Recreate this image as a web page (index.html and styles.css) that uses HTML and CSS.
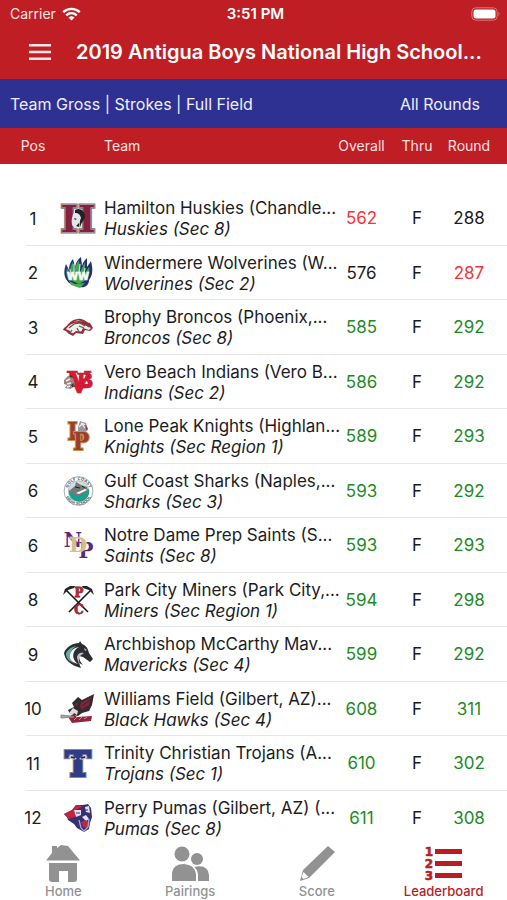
FILE: index.html
```html
<!DOCTYPE html>
<html lang="en">
<head>
<meta charset="utf-8">
<meta name="viewport" content="width=device-width, initial-scale=1">
<title>Leaderboard</title>
<link rel="stylesheet" href="styles.css">
</head>
<body>
<header class="top">
  <div class="status">
    <span class="carrier">Carrier
      <svg width="19" height="14" viewBox="0 0 19 14" fill="none" stroke="#fff" stroke-width="2.4"><path d="M1.2 5.2a12 12 0 0 1 16.600 0M4.200 8.300a7.600 7.600 0 0 1 10.600 0"/><path d="M9.500 13.600 6.500 10.600a4.300 4.300 0 0 1 6 0z" fill="#fff" stroke="none"/></svg>
    </span>
    <span class="clock">3:51 PM</span>
    <span class="battery">
      <svg width="30" height="14" viewBox="0 0 30 14"><rect x=".8" y=".8" width="25.400" height="12.400" rx="4" fill="none" stroke="#e0757a" stroke-width="1"/><rect x="2.500" y="2.500" width="22" height="9" rx="2.500" fill="#fff"/><path d="M27.500 4.800q2 2.200 0 4.400z" fill="#e0757a"/></svg>
    </span>
  </div>
  <div class="titlebar">
    <button class="menu" type="button" aria-label="Menu">
      <svg width="22" height="16" viewBox="0 0 22 16" fill="#fbe9e9"><path d="M0 0h22v2.500H0zM0 6.700h22v2.500H0zM0 13.400h22v2.500H0z"/></svg>
    </button>
    <h1>2019 Antigua Boys National High School...</h1>
  </div>
</header>
<div class="filter">
  <span>Team Gross | Strokes | Full Field</span>
  <button type="button">All Rounds</button>
</div>
<main class="board">
<table>
  <colgroup><col class="c-pos"><col class="c-logo"><col><col class="c-overall"><col class="c-thru"><col class="c-round"></colgroup>
  <thead>
    <tr><th class="pos">Pos</th><th></th><th class="team">Team</th><th>Overall</th><th>Thru</th><th class="round">Round</th></tr>
  </thead>
  <tbody>
    <tr>
      <td class="pos">1</td>
      <td class="logo"><svg width="40" height="36" viewBox="0 0 40 36"><text x="19" y="32" text-anchor="middle" class="slab" font-size="37" fill="#86203f" stroke="#77777b" stroke-width="3">H</text><text x="19" y="32" text-anchor="middle" class="slab" font-size="37" fill="#86203f" stroke="#b9a5ac" stroke-width="1">H</text><path d="M13 25c-1-5 0-10 3-14l2 1c4-1 6 2 6 6l-2 5 1 4-7 1z" fill="#e4e8e6"/><path d="M16 10c5-3 10 1 10 7-1 4-4 5-5 11-1-4 0-8 1-10-1-4-3-5-6-5zM15 18l3 1-2 1zM17 26l3-3 0 4z" fill="#222"/></svg></td>
      <td class="team">Hamilton Huskies (Chandle...<i>Huskies (Sec 8)</i></td>
      <td class="under">562</td><td>F</td><td class="round">288</td>
    </tr>
    <tr>
      <td class="pos">2</td>
      <td class="logo"><svg width="40" height="36" viewBox="0 0 40 36"><path d="M10 28C5 23 4 17 7 9l3 6c0-4 1-8 4-11l2 8c1-5 3-8 6-10l1 9c1-4 3-6 5-8l0 9 4-6c2 8 2 14-2 19 0 6-5 8-9 7-3-1-7-2-11-4z" fill="#272d72"/><path d="M9 24c-2-4-2-8-1-11l3 6c0-6 1-9 3-12l1 10c1-6 3-9 5-12l1 12 5-10 0 11 4-6c1 5 0 10-3 13l-7 4z" fill="#42a94d"/><path d="m11 14 1 7m3-12v9m6-9-1 9m6-5-1 6" stroke="#b9d7e8" stroke-width="1.300"/><path d="m10 26 6 3 10-1-5 5-9-3z" fill="#48ad4e"/><text x="19" y="25" text-anchor="middle" class="heavy" font-size="10" fill="#fff" stroke="#fff" stroke-width=".5">WW</text></svg></td>
      <td class="team">Windermere Wolverines (W...<i>Wolverines (Sec 2)</i></td>
      <td>576</td><td>F</td><td class="round under">287</td>
    </tr>
    <tr>
      <td class="pos">3</td>
      <td class="logo"><svg width="40" height="36" viewBox="0 0 40 36"><path d="M5 19c4-2 5-8 14-9 6-1 8 4 12 4l3 5-3 3-5-1-2 4-7-1-3 3-4-2-3-3-3-1z" fill="#9c2a32"/><path d="M7 20c5-7 12-8 18-4l7 3-2 2-6-2-2 4-5-1-4 3-2-3z" fill="#f3eeee"/><path d="m10 19 5-4 6-1 5 3m-13 4-2 3 4 1m3-6 2 4 4 0m-4-6 5 2m2-4 3 3" fill="none" stroke="#555" stroke-width="1.200"/><path d="m14 13 5-2 6 2-5-1z" fill="#e3a3a3"/></svg></td>
      <td class="team">Brophy Broncos (Phoenix,...<i>Broncos (Sec 8)</i></td>
      <td class="over">585</td><td>F</td><td class="round over">292</td>
    </tr>
    <tr>
      <td class="pos">4</td>
      <td class="logo"><svg width="40" height="36" viewBox="0 0 40 36"><text x="26" y="24" text-anchor="middle" class="slab" font-size="20" fill="#d71932" stroke="#6d1020" stroke-width=".6">B</text><text x="20" y="29" text-anchor="middle" class="slab" font-size="30" fill="#dc1832" stroke="#8a1426" stroke-width=".6">V</text><path d="M12 20h18v3H12z" fill="#d71932"/><path d="m5 16 4-4 5 2 2 6-4 5-6-1 2-3-3-1z" fill="#9b8582"/><path d="m7 17 4-2m-3 5 4-1m-4 4 3-1" stroke="#eee" stroke-width="1.500"/><path d="m9 12 3-1 2 3zM12 21l3-2-1 5z" fill="#333"/></svg></td>
      <td class="team">Vero Beach Indians (Vero B...<i>Indians (Sec 2)</i></td>
      <td class="over">586</td><td>F</td><td class="round over">292</td>
    </tr>
    <tr>
      <td class="pos">5</td>
      <td class="logo"><svg width="40" height="36" viewBox="0 0 40 36"><text x="16" y="22" text-anchor="middle" class="slab narrow" font-size="24" fill="#9c3d32" stroke="#c99244" stroke-width="2">L</text><path d="m19 9 2-6 6 2 2 7-4 3-6-1z" fill="#99969e"/><path d="m20 9 3-3 3 4m-4-5 5 2" fill="none" stroke="#eee" stroke-width="1.200"/><path d="m26 5 3 6-2 1z" fill="#b8303a"/><text x="22" y="32" text-anchor="middle" class="slab narrow" font-size="24" fill="#9c3d32" stroke="#c99244" stroke-width="2">P</text></svg></td>
      <td class="team">Lone Peak Knights (Highlan...<i>Knights (Sec Region 1)</i></td>
      <td class="over">589</td><td>F</td><td class="round over">293</td>
    </tr>
    <tr>
      <td class="pos">6</td>
      <td class="logo"><svg width="40" height="36" viewBox="0 0 40 36"><defs><path id="arc-top" d="M8.500 18a11 11 0 0 1 22 0"/><path id="arc-low" d="M5.500 18a14 14 0 0 0 28 0"/></defs><circle cx="19.500" cy="18" r="14.400" fill="#fff" stroke="#a4aaaa" stroke-width="1"/><circle cx="19.500" cy="18" r="10.200" fill="#d6dfdc" stroke="#8e9998" stroke-width=".6"/><path d="M10 17q5 4 20-1a10 10 0 0 1-20 5z" fill="#19a08d"/><path d="m11 17 5-4 1-4 5 3 6 2 1 4-7 4-6 1z" fill="#74797c"/><path d="m17 20 9-4 2 1-8 4z" fill="#fff"/><path d="m16 14 5 1m2-2 3 2" stroke="#222"/><g class="heavy" font-size="4" fill="#5f6868"><text><textPath href="#arc-top" startOffset="50%" text-anchor="middle">GULF COAST</textPath></text><text><textPath href="#arc-low" startOffset="50%" text-anchor="middle">HIGH SCHOOL</textPath></text></g></svg></td>
      <td class="team">Gulf Coast Sharks (Naples,...<i>Sharks (Sec 3)</i></td>
      <td class="over">593</td><td>F</td><td class="round over">292</td>
    </tr>
    <tr>
      <td class="pos">6</td>
      <td class="logo"><svg width="40" height="36" viewBox="0 0 40 36"><text x="14" y="20" text-anchor="middle" class="slab" font-size="20" fill="#56287e">N</text><text x="27" y="31" text-anchor="middle" class="slab narrow" font-size="22" fill="#56287e">P</text><text x="19" y="25" text-anchor="middle" class="slab" font-size="21" fill="#d7bf82" stroke="#fff" stroke-width=".5">D</text></svg></td>
      <td class="team">Notre Dame Prep Saints (S...<i>Saints (Sec 8)</i></td>
      <td class="over">593</td><td>F</td><td class="round over">293</td>
    </tr>
    <tr>
      <td class="pos">8</td>
      <td class="logo"><svg width="40" height="36" viewBox="0 0 40 36"><path d="m7 8 22 22M32 8 10 30" stroke="#171717" stroke-width="1.600"/><path d="m4 13 2-6 5-3 5 0-1 2-6 2-3 3zM35 13l-2-6-5-3-5 0 1 2 6 2 3 3z" fill="#252525"/><text x="20" y="15" text-anchor="middle" class="slab narrow" font-size="13" fill="#b42732" stroke="#7b1723" stroke-width=".8">P</text><text x="20" y="32" text-anchor="middle" class="slab narrow" font-size="13" fill="#b42732" stroke="#7b1723" stroke-width=".8">C</text></svg></td>
      <td class="team">Park City Miners (Park City,...<i>Miners (Sec Region 1)</i></td>
      <td class="over">594</td><td>F</td><td class="round over">298</td>
    </tr>
    <tr>
      <td class="pos">9</td>
      <td class="logo"><svg width="40" height="36" viewBox="0 0 40 36"><path d="M22 32C11 29 6 24 5 17 7 11 14 7 20 7l1-2 2 3c5 2 6 5 7 9l4 6-3 3-7-5-4-1c0 4 2 7 4 9l-4-2z" fill="#2b2d30"/><path d="M17 28C10 24 9 14 18 10 11 11 7 15 7 19c1 5 5 7 10 9z" fill="#66aaa6"/><path d="M19 28c-7-5-6-14 1-17-6 1-10 5-9 11 1 3 4 5 8 6z" fill="#fff"/><path d="m20 28-2-6c0-4 3-6 7-5l-4 3c-2 3 0 5-1 8zM25 12l3 2-2 1z" fill="#b9bbc0"/></svg></td>
      <td class="team">Archbishop McCarthy Mav...<i>Mavericks (Sec 4)</i></td>
      <td class="over">599</td><td>F</td><td class="round over">292</td>
    </tr>
    <tr>
      <td class="pos">10</td>
      <td class="logo"><svg width="40" height="36" viewBox="0 0 40 36"><path d="m13 12 6-6 4 3L35 3l-2 11-3 6-7 2-4 3-8-2-2-4 6-3z" fill="#302b2d"/><path d="m22 11 10-6-2 10-6 4-3-3zM15 14l4-3-1 4z" fill="#84213b"/><path d="m23 15 8-6m-7 9 7-4m-8-3 8-5" stroke="#302b2d"/><path d="m10 22 4-5 5 3-1 4-3-2-3 4z" fill="#ddd"/><path d="m9 26 6-3 3 3 15-1-1 5-19 2-2-3z" fill="#91233d"/><path d="m2 24 9 1 4 1-13 1z" stroke="#888" fill="#aaa"/><path d="m15 29 3-3m2 3 3-3m2 2 3-2" stroke="#c98a99"/></svg></td>
      <td class="team">Williams Field (Gilbert, AZ)...<i>Black Hawks (Sec 4)</i></td>
      <td class="over">608</td><td>F</td><td class="round over">311</td>
    </tr>
    <tr>
      <td class="pos">11</td>
      <td class="logo"><svg width="40" height="36" viewBox="0 0 40 36"><text x="19" y="31" text-anchor="middle" class="slab" font-size="34" fill="#303c85" stroke="#858a98" stroke-width="4">T</text><text x="19" y="31" text-anchor="middle" class="slab" font-size="34" fill="#303c85" stroke="#303c85" stroke-width="2">T</text><path d="M9 12q5-3 9 2-5 2-9-2zM29 12q-5-3-9 2 5 2 9-2z" fill="#bdc0c4"/><path d="M12 12l4 1m10-1-4 1" stroke="#20244a" stroke-width="1.500"/></svg></td>
      <td class="team">Trinity Christian Trojans (A...<i>Trojans (Sec 1)</i></td>
      <td class="over">610</td><td>F</td><td class="round over">302</td>
    </tr>
    <tr>
      <td class="pos">12</td>
      <td class="logo"><svg width="40" height="36" viewBox="0 0 40 36"><path d="m5 14 8-4 4-5 7 0 5-1 3 4 1 9-2 6-1 6-5 3-7-4-3-4-6-4-1-3z" fill="#353072"/><path d="m5 14 8-4 4-5 7 1-7 4-1 7-6 2z" fill="#c52342"/><path d="m15 10 7 0 0 5-5 2zM26 7l4-1 1 7-4-1zM23 17l4-2 3 4-3 2z" fill="#e4e0ee"/><path d="m17 13 4 0m5-3 3 0" stroke="#353072"/><path d="m22 22 4-2 4 2-2 6-4-1z" fill="#b52b48"/><path d="m20 20 2 8 3 3 4-4 1-8" fill="none" stroke="#aaa6cf" stroke-width="1.300"/></svg></td>
      <td class="team">Perry Pumas (Gilbert, AZ) (...<i>Pumas (Sec 8)</i></td>
      <td class="over">611</td><td>F</td><td class="round over">308</td>
    </tr>
  </tbody>
</table>
</main>
<nav class="tabs">
  <a href="#home"><svg width="40" height="40" viewBox="0 0 40 40" fill="#929292"><path d="M3 17.500 9 10V3h5v2l4-3 7 1 12 14.500zM6 20h28v16q0 3-3 3h-6V28h-9v11h-7q-3 0-3-3z"/></svg>Home</a>
  <a href="#pairings"><svg width="40" height="40" viewBox="0 0 40 40" fill="#929292"><circle cx="12" cy="11" r="7.500"/><circle cx="27" cy="16" r="6"/><path d="M2 38V30q1-9 12-9 11 1 12 10v7zM28 38v-7q-1-5-4-7 14-3 15 8v6z"/></svg>Pairings</a>
  <a href="#score"><svg width="40" height="40" viewBox="0 0 40 40" fill="#929292"><path d="m31 3 7 6-26 26-9 3 3-11z"/><path d="m6.500 29 5 5-5 2-2-2z" fill="#fff"/></svg>Score</a>
  <a href="#leaderboard" class="current"><svg width="40" height="40" viewBox="0 0 40 40" fill="#b91c23"><path d="M11 6h27v5H11zM11 18h27v5H11zM11 30h27v5H11z"/><g class="heavy" font-size="12" text-anchor="middle" stroke="#b91c23" stroke-width=".6"><text x="5" y="13">1</text><text x="5" y="25">2</text><text x="5" y="37">3</text></g></svg>Leaderboard</a>
</nav>
</body>
</html>
```

FILE: styles.css
```css
* { box-sizing: border-box; }

body {
  margin: 0;
  height: 100vh;
  display: flex;
  flex-direction: column;
  background: #fff;
  color: #1c1c1e;
  font-family: Inter, "Liberation Sans", sans-serif;
  font-size: 17px;
}

button {
  border: 0;
  padding: 0;
  background: none;
  color: inherit;
  font: inherit;
}

svg {
  display: block;
  overflow: visible;
}

.top {
  background: #bf1e24;
  color: #fff;
}

.status {
  display: grid;
  grid-template-columns: 1fr auto 1fr;
  align-items: center;
  height: 27px;
  padding: 0 6px 0 10px;
  font-size: 14px;
}

.carrier {
  display: flex;
  align-items: center;
  gap: 6px;
  color: #fbe3e3;
}

.clock {
  font-size: 15px;
  font-weight: 600;
}

.battery { justify-self: end; }

.titlebar {
  display: flex;
  align-items: center;
  height: 52px;
  padding: 0 0 2px 29px;
}

.menu { width: 47px; }

h1 {
  margin: 0;
  font-size: 20px;
  font-weight: 600;
  white-space: nowrap;
}

.filter {
  display: flex;
  align-items: center;
  justify-content: space-between;
  height: 49px;
  padding: 0 27px 0 10px;
  background: #2e3192;
  color: #eeeefa;
  font-size: 16px;
}

.board {
  flex: 1;
  min-height: 0;
  overflow-y: auto;
  scrollbar-width: none;
}

table {
  width: 100%;
  table-layout: fixed;
  border-collapse: separate;
  border-spacing: 0;
}

.c-pos { width: 56px; }
.c-logo { width: 48px; }
.c-overall { width: 55px; }
.c-thru { width: 56px; }
.c-round { width: 62px; }

th {
  height: 36px;
  padding: 0 0 2px;
  background: #bf1e24;
  color: #fbe3e3;
  font-size: 14px;
  font-weight: 400;
}

tbody::before {
  content: "";
  display: block;
  height: 27px;
}

td {
  height: 55px;
  padding: 0;
  border-bottom: 1px solid #e6e6e6;
  text-align: center;
  white-space: nowrap;
}

tr:nth-child(even) td { height: 54px; }

.pos { padding-left: 10px; }

td.pos {
  border-bottom: 0;
  background: linear-gradient(#e6e6e6, #e6e6e6) 26px 100% / 100% 1px no-repeat;
}

.logo svg { margin: 0 auto 0 3px; }

.team {
  text-align: left;
  line-height: 21px;
}

td.team { padding-top: 2px; }

.team i { display: block; }

.round { padding-right: 14px; }

.under { color: #f5333a; }
.over { color: #1e8a26; }

.slab {
  font-family: "DejaVu Serif", serif;
  font-weight: 700;
  paint-order: stroke;
}

.narrow { font-family: "DejaVu Serif Condensed", "DejaVu Serif", serif; }

.heavy {
  font-family: "DejaVu Sans", sans-serif;
  font-weight: 700;
}

.tabs {
  display: grid;
  grid-template-columns: repeat(4, 1fr);
  height: 60px;
  background: #fff;
}

.tabs a {
  display: flex;
  flex-direction: column;
  align-items: center;
  padding-top: 3px;
  color: #929292;
  font-size: 13px;
  font-weight: 500;
  line-height: 16px;
  text-decoration: none;
}

.tabs .current { color: #b91c23; }
```
